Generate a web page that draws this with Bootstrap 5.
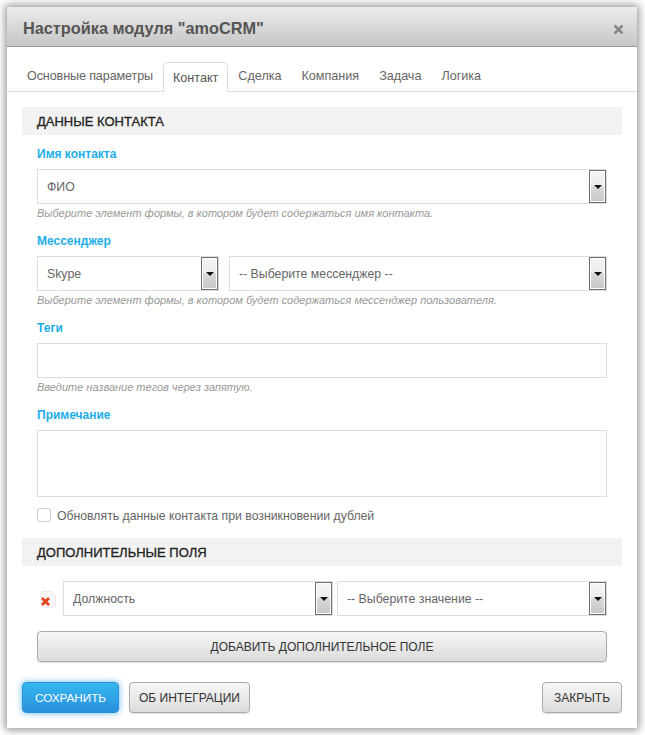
<!DOCTYPE html>
<html lang="ru">
<head>
<meta charset="utf-8">
<title>Настройка модуля</title>
<link rel="stylesheet" href="https://cdn.jsdelivr.net/npm/bootstrap@5.3.0/dist/css/bootstrap.min.css">
<style>
html,body{background:#fff;height:735px;overflow:hidden}
body{font-family:"Liberation Sans",Arial,sans-serif;font-size:12px;color:#555;padding:7px 8px 7px 7px}
.dlg{width:630px;height:721px;border:0;border-radius:0;box-shadow:0 0 8px 2px rgba(0,0,0,.42);background:#fff}
.dlg-head{height:40px;padding:0 16px;border-bottom:1px solid #999;border-radius:0;background:linear-gradient(#ececec,#c6c6c6)}
.dlg-title{font-size:16.3px;font-weight:700;color:#555;margin:2px 0 0;line-height:38px}
.dlg-x{display:block;width:11px;height:11px;margin:5px -3px 0 0}
.tabbar{padding:15px 10px 0;border-bottom:1px solid #ddd;height:45px;flex-wrap:nowrap}
.tabbar .nav-link{font-size:12.6px;color:#666;padding:0 9px;height:30px;line-height:27px;margin:0;border:1px solid transparent;border-radius:5px 5px 0 0;margin-bottom:-1px}
.tabbar .nav-link.active{color:#555;border-color:#ddd #ddd #fff;line-height:30px}
.tabbar .tab-first{letter-spacing:-.12px}
.dlg-body{padding:15px 15px 0;flex:1 1 auto}
.sect{height:28px;line-height:30px;background:#f2f2f2;padding-left:15px;font-size:13px;color:#222;margin:0 0 11px;font-weight:400;-webkit-text-stroke:.3px #222}
.sect-tight{margin-bottom:15px}
.fields{padding:0 15px}
.fld{margin-bottom:11px}
.lbl{display:block;height:17px;line-height:17px;font-size:12px;font-weight:700;color:#1cade9;margin:0 0 6px}
.hint{height:18px;line-height:18px;font-size:11px;font-style:italic;color:#999}
.sel{height:35px;border:1px solid #ddd;background:#fff;min-width:0}
.sel select{appearance:none;-webkit-appearance:none;border:0;outline:0;background:transparent;flex:1 1 auto;min-width:0;height:100%;padding:0 9px;font:12.3px "Liberation Sans",Arial,sans-serif;color:#666}
.sel-arrow{flex:0 0 17px;width:17px;border:1px solid #6e6e6e;box-shadow:inset 0 0 0 1px #fff;background:linear-gradient(#f4f4f4 0,#ececec 48%,#d9d9d9 49%,#c8c8c8 100%)}
.sel-arrow::after{content:"";width:0;height:0;border:4px solid transparent;border-top:4px solid #111;border-bottom:0}
.inp{border:1px solid #ddd;border-radius:0;height:35px;background:#fff;padding:0 9px;font-size:12px;color:#666;box-shadow:none}
textarea.inp{height:67px;resize:none}
.chk{margin:11px 0 16px;min-height:0;height:14px;line-height:14px;font-size:12.25px;color:#666;padding:0}
.chk label{padding-top:1px}
.chk .form-check-input{float:none;margin:0 6px 0 0;width:14px;height:14px;border:1px solid #ccc;border-radius:3px}
.w-skype{flex:0 0 182px;width:182px}
.w-half{flex:0 0 270px;width:270px}
.msgr{margin-left:10px}
.del-ic{flex:0 0 20px;width:20px;height:18px;margin:10px 6px 0 0}
.btn-gray{display:block;font-size:12px;color:#333;text-transform:uppercase;height:31px;line-height:30px;padding:0;border:1px solid #aaa;border-radius:4px;background:linear-gradient(#f6f6f6,#dcdcdc);box-shadow:0 1px 1px rgba(0,0,0,.12)}
.btn-gray:hover{color:#333;border-color:#aaa}
.add-btn{width:570px;margin-top:15px}
.dlg-foot{padding:0 15px;height:46px;margin-bottom:15px;border:0;flex-wrap:nowrap}
.b-save{width:97px;height:31px;line-height:30px;padding:0;font-size:11.7px;color:#fff;text-transform:uppercase;border:1px solid #2b90d9;border-radius:4px;background:linear-gradient(#35b8f0,#2a8fdc);box-shadow:0 0 6px rgba(40,160,240,.75)}
.b-save:hover{color:#fff}
.dlg-foot .b-info{width:121px;margin:0 0 0 10px}
.dlg-foot .b-close{width:80px;margin:0 0 0 auto}
</style>
</head>
<body>
<div class="modal-content dlg d-flex flex-column">
  <div class="modal-header dlg-head d-flex justify-content-between align-items-center">
    <h5 class="dlg-title">Настройка модуля "amoCRM"</h5>
    <svg class="dlg-x" viewBox="0 0 11 11"><path d="M1.5 1.5 9.5 9.5M9.5 1.5 1.5 9.5" stroke="#888" stroke-width="2.6" fill="none"/></svg>
  </div>
  <ul class="nav nav-tabs tabbar">
    <li class="nav-item"><a class="nav-link tab-first" href="#">Основные параметры</a></li>
    <li class="nav-item"><a class="nav-link active" href="#">Контакт</a></li>
    <li class="nav-item"><a class="nav-link" href="#">Сделка</a></li>
    <li class="nav-item"><a class="nav-link" href="#">Компания</a></li>
    <li class="nav-item"><a class="nav-link" href="#">Задача</a></li>
    <li class="nav-item"><a class="nav-link" href="#">Логика</a></li>
  </ul>
  <div class="dlg-body">
    <h6 class="sect">ДАННЫЕ КОНТАКТА</h6>
    <div class="fields">
      <div class="fld">
        <label class="lbl">Имя контакта</label>
        <div class="sel d-flex"><select><option>ФИО</option></select><span class="sel-arrow d-flex align-items-center justify-content-center"></span></div>
        <div class="hint">Выберите элемент формы, в котором будет содержаться имя контакта.</div>
      </div>
      <div class="fld">
        <label class="lbl">Мессенджер</label>
        <div class="d-flex">
          <div class="sel d-flex w-skype"><select><option>Skype</option></select><span class="sel-arrow d-flex align-items-center justify-content-center"></span></div>
          <div class="sel d-flex flex-fill msgr"><select><option>-- Выберите мессенджер --</option></select><span class="sel-arrow d-flex align-items-center justify-content-center"></span></div>
        </div>
        <div class="hint">Выберите элемент формы, в котором будет содержаться мессенджер пользователя.</div>
      </div>
      <div class="fld">
        <label class="lbl">Теги</label>
        <input type="text" class="form-control inp">
        <div class="hint">Введите название тегов через запятую.</div>
      </div>
      <div class="fld mb-0">
        <label class="lbl">Примечание</label>
        <textarea class="form-control inp"></textarea>
      </div>
      <div class="form-check chk d-flex align-items-center">
        <input class="form-check-input" type="checkbox" id="dup">
        <label for="dup">Обновлять данные контакта при возникновении дублей</label>
      </div>
    </div>
    <h6 class="sect sect-tight">ДОПОЛНИТЕЛЬНЫЕ ПОЛЯ</h6>
    <div class="fields">
      <div class="d-flex">
        <svg class="del-ic" viewBox="0 0 20 18"><path d="M5.500.5h8l5 5v9a1.500 1.500 0 0 1-1.500 1.500H5.500A1.500 1.500 0 0 1 4 14.500V2A1.500 1.500 0 0 1 5.500.5z" fill="#f6f6f6" stroke="#e8e8e8"/><path d="M5 7 12 14M12 7 5 14" stroke="#e2431c" stroke-width="2.800" fill="none"/></svg>
        <div class="sel d-flex w-half"><select><option>Должность</option></select><span class="sel-arrow d-flex align-items-center justify-content-center"></span></div>
        <div class="sel d-flex w-half ms-1"><select><option>-- Выберите значение --</option></select><span class="sel-arrow d-flex align-items-center justify-content-center"></span></div>
      </div>
      <a href="#" class="btn btn-gray add-btn">Добавить дополнительное поле</a>
    </div>
  </div>
  <div class="modal-footer dlg-foot d-flex align-items-end justify-content-start">
    <a href="#" class="btn b-save m-0">Сохранить</a>
    <a href="#" class="btn btn-gray b-info">Об интеграции</a>
    <a href="#" class="btn btn-gray b-close">Закрыть</a>
  </div>
</div>
<script src="https://cdn.jsdelivr.net/npm/bootstrap@5.3.0/dist/js/bootstrap.bundle.min.js"></script>
</body>
</html>
